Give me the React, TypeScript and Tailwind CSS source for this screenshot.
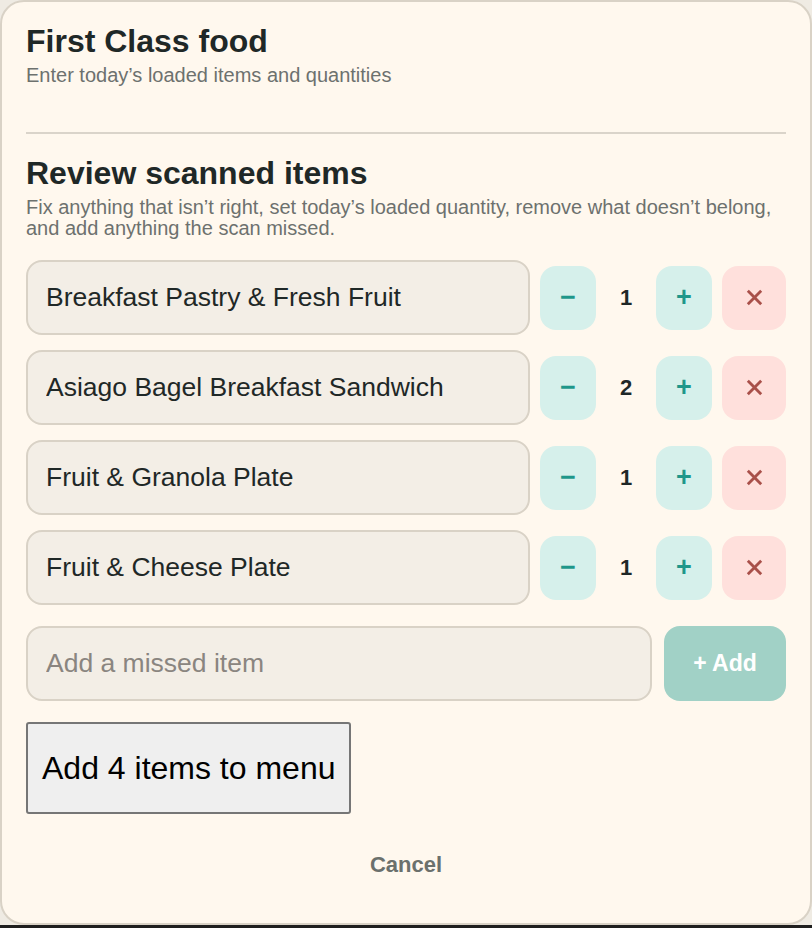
import { useState } from "react";

const initialItems = [
  { name: "Breakfast Pastry & Fresh Fruit", qty: 1 },
  { name: "Asiago Bagel Breakfast Sandwich", qty: 2 },
  { name: "Fruit & Granola Plate", qty: 1 },
  { name: "Fruit & Cheese Plate", qty: 1 },
];

export default function App() {
  const [items, setItems] = useState(initialItems);
  const [missed, setMissed] = useState("");

  const setQty = (i: number, d: number) =>
    setItems(items.map((it, j) => (j === i ? { ...it, qty: Math.max(0, it.qty + d) } : it)));

  return (
    <div className="flex h-[928px] flex-col bg-[#efebe3] font-['Liberation_Sans',Arial,sans-serif]">
      <div className="flex h-[925px] flex-col rounded-[24px] border-2 border-[#d9d2c6] bg-[#fff8ee] px-6">
        <h1 className="mt-[20px] text-[32px] font-bold leading-[38px] text-[#1f2827]">First Class food</h1>
        <p className="mt-[3px] text-[20px] leading-[24px] text-[#6d716e]">Enter today’s loaded items and quantities</p>

        <div className="mt-[45px] h-[2px] bg-[#dad4ca]" />

        <h2 className="mt-[20px] text-[32px] font-bold leading-[38px] text-[#1f2827]">Review scanned items</h2>
        <p className="mt-[5px] text-[20px] leading-[21px] text-[#6d716e]">
          Fix anything that isn’t right, set today’s loaded quantity, remove what doesn’t belong, and add anything the scan missed.
        </p>

        <div className="mt-[21px] flex flex-col gap-[15px]">
          {items.map((it, i) => (
            <div key={i} className="flex items-center gap-[10px]">
              <input
                value={it.name}
                onChange={(e) => setItems(items.map((x, j) => (j === i ? { ...x, name: e.target.value } : x)))}
                className="h-[75px] min-w-0 flex-1 rounded-[16px] border-2 border-[#d9d2c6] bg-[#f3eee6] px-[18px] text-[26.5px] text-[#1f2827] outline-none"
              />
              <button
                onClick={() => setQty(i, -1)}
                className="flex h-16 w-14 items-center justify-center rounded-[16px] bg-[#d6f0eb] text-[27px] font-bold text-[#1f978a]"
              >
                −
              </button>
              <span className="w-10 text-center text-[22px] font-bold text-[#1f2827]">{it.qty}</span>
              <button
                onClick={() => setQty(i, 1)}
                className="flex h-16 w-14 items-center justify-center rounded-[16px] bg-[#d6f0eb] text-[27px] font-bold text-[#1f978a]"
              >
                +
              </button>
              <button
                onClick={() => setItems(items.filter((_, j) => j !== i))}
                className="flex h-16 w-16 items-center justify-center rounded-[16px] bg-[#ffe0dc] text-[#a9504a]"
              >
                <svg width="17" height="17" viewBox="0 0 18 18">
                  <path d="M3 3 L15 15 M15 3 L3 15" stroke="currentColor" strokeWidth="3" strokeLinecap="square" />
                </svg>
              </button>
            </div>
          ))}
        </div>

        <div className="mt-[21px] flex gap-[12px]">
          <input
            value={missed}
            onChange={(e) => setMissed(e.target.value)}
            placeholder="Add a missed item"
            className="h-[75px] min-w-0 flex-1 rounded-[16px] border-2 border-[#d9d2c6] bg-[#f3eee6] px-[18px] text-[26.5px] text-[#1f2827] outline-none placeholder:text-[#8a8580]"
          />
          <button className="h-[75px] w-[122px] rounded-[16px] bg-[#a1d1c6] text-[23px] font-bold text-white">+ Add</button>
        </div>

        <div className="mt-[21px]">
          <button className="h-[92px] rounded-[3px] border-2 border-[#767676] bg-[#efefef] px-[14px] text-[32px] text-black">
            Add {items.length} items to menu
          </button>
        </div>

        <button className="mx-auto mt-[34px] text-[22px] font-bold text-[#6b706c]">Cancel</button>
      </div>
      <div className="flex-1 bg-[#1f1f1f]" />
    </div>
  );
}
